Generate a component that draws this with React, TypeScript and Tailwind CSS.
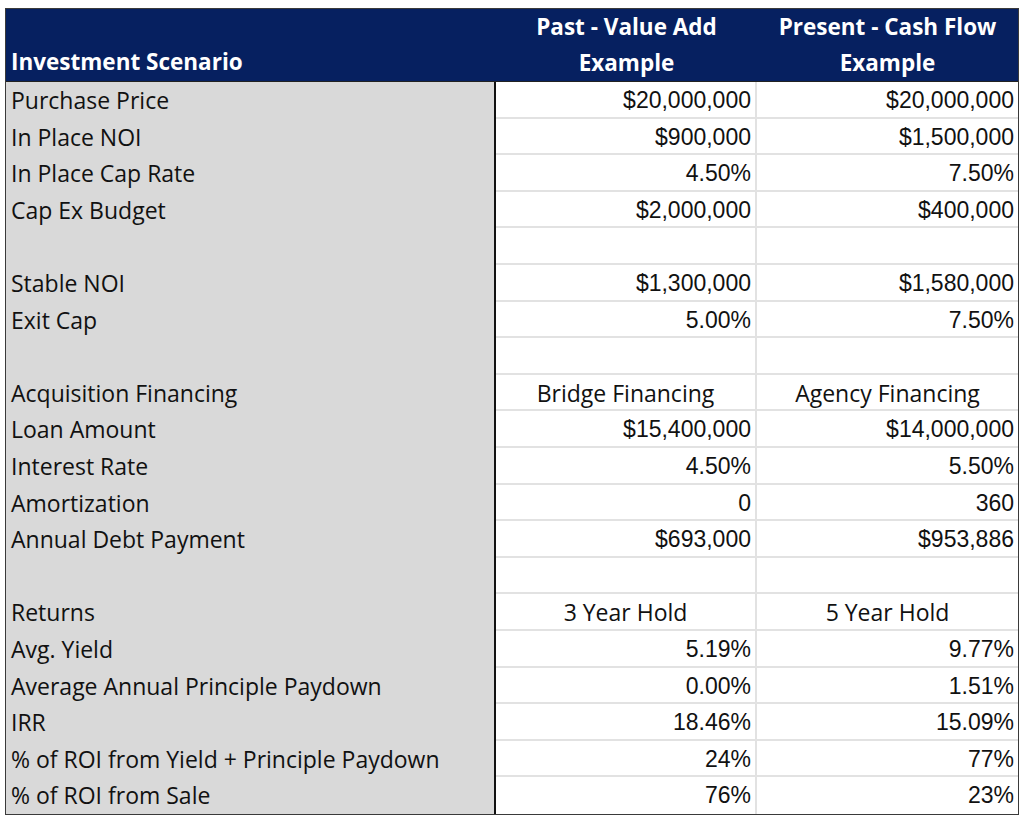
const rows: [string, string, string, boolean?][] = [
  ["Purchase Price", "$20,000,000", "$20,000,000"],
  ["In Place NOI", "$900,000", "$1,500,000"],
  ["In Place Cap Rate", "4.50%", "7.50%"],
  ["Cap Ex Budget", "$2,000,000", "$400,000"],
  ["", "", ""],
  ["Stable NOI", "$1,300,000", "$1,580,000"],
  ["Exit Cap", "5.00%", "7.50%"],
  ["", "", ""],
  ["Acquisition Financing", "Bridge Financing", "Agency Financing", true],
  ["Loan Amount", "$15,400,000", "$14,000,000"],
  ["Interest Rate", "4.50%", "5.50%"],
  ["Amortization", "0", "360"],
  ["Annual Debt Payment", "$693,000", "$953,886"],
  ["", "", ""],
  ["Returns", "3 Year Hold", "5 Year Hold", true],
  ["Avg. Yield", "5.19%", "9.77%"],
  ["Average Annual Principle Paydown", "0.00%", "1.51%"],
  ["IRR", "18.46%", "15.09%"],
  ["% of ROI from Yield + Principle Paydown", "24%", "77%"],
  ["% of ROI from Sale", "76%", "23%"],
]

const label = { fontFamily: "'Open Sans', 'Noto Sans', sans-serif" }
const nums = { fontFamily: "'Liberation Sans', Arial, sans-serif" }

export default function App() {
  return (
    <div className="min-h-screen bg-white pt-[8px] pl-[5px]">
      <div className="w-[1014px] border border-[#3a3a3a]">
        <div className="grid grid-cols-[490px_261px_261px] bg-[#062060] text-white font-bold text-[22.5px] h-[72px]" style={label}>
          <div className="flex items-end pl-[5px] pb-[1px] leading-[36px]">Investment Scenario</div>
          <div className="text-center leading-[36px]">Past - Value Add<br />Example</div>
          <div className="text-center leading-[36px]">Present - Cash Flow<br />Example</div>
        </div>
        <div className="grid grid-cols-[490px_261px_261px] border-t border-[#222]">
          {rows.map(([name, a, b, center], i) => {
            const last = i === rows.length - 1
            const rowLine = last ? "" : "border-b-2 border-b-[#e2e2e2]"
            return [
              <div
                key={"l" + i}
                className="h-[36.6px] bg-[#d9d9d9] border-r-2 border-r-[#111] text-[23px] text-[#111] pl-[5px] leading-[36px] whitespace-nowrap"
                style={label}
              >
                {name}
              </div>,
              <div
                key={"a" + i}
                className={`h-[36.6px] border-r-2 border-r-[#e2e2e2] ${rowLine} text-[#111] leading-[36px] whitespace-nowrap ${center ? "text-center text-[23px]" : "text-right pr-[4px] text-[23px]"}`}
                style={center ? label : nums}
              >
                {a}
              </div>,
              <div
                key={"b" + i}
                className={`h-[36.6px] ${rowLine} text-[#111] leading-[36px] whitespace-nowrap ${center ? "text-center text-[23px]" : "text-right pr-[4px] text-[23px]"}`}
                style={center ? label : nums}
              >
                {b}
              </div>,
            ]
          })}
        </div>
      </div>
    </div>
  )
}
